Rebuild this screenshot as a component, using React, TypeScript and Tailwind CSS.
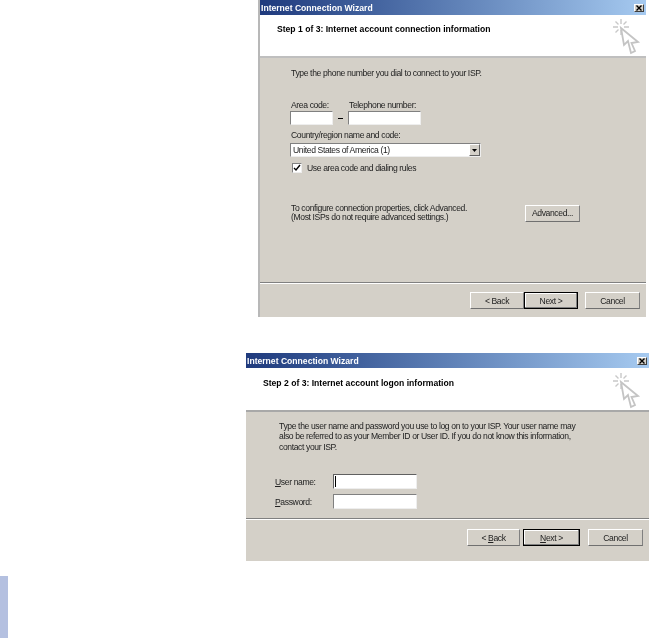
import type { ReactNode } from 'react';

function CursorIcon({ className }: { className: string }) {
  return (
    <svg width="26" height="38" viewBox="0 0 26 38" fill="none" className={'shrink-0 overflow-visible ' + className}>
      <path d="M9 1v5M9 12v5M1 9h5M12 9h5M3.5 3.5l3 3M14.5 3.5l-3 3M3.5 14.5l3-3" stroke="#c8c8c8" strokeWidth="1.4" />
      <path d="M9 10l3 17 4-4 3 12 4-2-3.5-8 6.500-1z" fill="#fff" stroke="#c4c4c4" strokeWidth="1.800" />
    </svg>
  );
}

function CloseButton() {
  return (
    <div className="flex h-[8px] w-[10px] items-center justify-center border border-t-white border-l-white border-r-[#404040] border-b-[#404040] bg-[#d4d0c8]">
      <svg width="6" height="6" viewBox="0 0 6 6">
        <path d="M0.500 0.500l5 5M5.500 0.500l-5 5" stroke="#000" strokeWidth="1.400" />
      </svg>
    </div>
  );
}

function WinButton({ children, def, className }: { children: ReactNode; def?: boolean; className: string }) {
  return (
    <div
      className={
        'flex items-center justify-center text-[8.600px] leading-[10px] tracking-[-0.38px] text-[#222] bg-[#d4d0c8] ' +
        (def
          ? 'border border-black shadow-[inset_-1px_-1px_0_#808080,inset_1px_1px_0_#fff] '
          : 'border border-t-white border-l-white border-r-[#808080] border-b-[#707070] ') +
        className
      }
    >
      {children}
    </div>
  );
}

function Field({ className }: { className: string }) {
  return (
    <div
      className={
        'bg-white border border-t-[#808080] border-l-[#808080] border-r-[#eeeeee] border-b-[#eeeeee] ' + className
      }
    />
  );
}

function TitleBar() {
  return (
    <div className="flex h-[15px] items-center justify-between bg-gradient-to-r from-[#1f3a7d] to-[#a6caf0] pl-[1px] pr-[2px]">
      <span className="mt-[1px] text-[8.600px] leading-[10px] font-bold text-white">Internet Connection Wizard</span>
      <CloseButton />
    </div>
  );
}

function FirstDialog() {
  return (
    <div className="ml-[258px] flex h-[317px] w-[388px] flex-col border-l-2 border-[#b8b8b8]">
      <TitleBar />
      <div className="flex h-[43px] items-start justify-between border-b-2 border-[#bfbfbf] bg-white pt-[8px] pl-[17px] pr-[8px]">
        <span className="mt-[1px] text-[8.600px] leading-[10px] font-bold text-black">
          Step 1 of 3: Internet account connection information
        </span>
        <CursorIcon className="-mt-[5px]" />
      </div>
      <div className="flex flex-1 flex-col bg-[#d4d0c8] text-[8.600px] leading-[10px] tracking-[-0.38px] text-[#222]">
        <div className="pl-[31px] pt-[10px]">Type the phone number you dial to connect to your ISP.</div>
        <div className="mt-[22px] flex pl-[31px]">
          <div className="w-[58px]">Area code:</div>
          <div>Telephone number:</div>
        </div>
        <div className="mt-[1px] flex items-center pl-[30px]">
          <Field className="h-[14px] w-[43px]" />
          <div className="mx-[5px] h-[1px] w-[5px] bg-black" />
          <Field className="h-[14px] w-[73px]" />
        </div>
        <div className="mt-[5px] pl-[31px]">Country/region name and code:</div>
        <div className="mt-[3px] ml-[30px] flex h-[14px] w-[191px] items-center justify-between border border-t-[#808080] border-l-[#808080] border-r-[#eeeeee] border-b-[#eeeeee] bg-white pl-[2px]">
          <span>United States of America (1)</span>
          <div className="flex h-[12px] w-[11px] items-center justify-center border border-t-white border-l-white border-r-[#606060] border-b-[#606060] bg-[#d4d0c8]">
            <svg width="5" height="3" viewBox="0 0 5 3">
              <path d="M0 0h5L2.500 3z" fill="#000" />
            </svg>
          </div>
        </div>
        <div className="mt-[6px] flex items-center gap-[5px] pl-[32px]">
          <div className="flex h-[10px] w-[10px] items-center justify-center border border-t-[#808080] border-l-[#808080] border-r-[#eeeeee] border-b-[#eeeeee] bg-white">
            <svg width="8" height="8" viewBox="0 0 8 8">
              <path d="M1 4l2 2 4-5" stroke="#000" strokeWidth="1.400" fill="none" />
            </svg>
          </div>
          <span>Use area code and dialing rules</span>
        </div>
        <div className="mt-[31px] flex items-center pl-[31px]">
          <div className="w-[234px] leading-[9px]">
            <div>To configure connection properties, click Advanced.</div>
            <div>(Most ISPs do not require advanced settings.)</div>
          </div>
          <WinButton className="h-[17px] w-[55px]">Advanced...</WinButton>
        </div>
        <div className="mt-[60px] border-t border-b border-t-[#808080] border-b-white" />
        <div className="mt-[8px] flex pl-[210px]">
          <WinButton className="h-[17px] w-[54px]">&lt; Back</WinButton>
          <WinButton def className="h-[17px] w-[54px]">Next &gt;</WinButton>
          <WinButton className="ml-[7px] h-[17px] w-[55px]">Cancel</WinButton>
        </div>
      </div>
    </div>
  );
}

function SecondDialog() {
  return (
    <div className="mt-[36px] ml-[246px] flex h-[208px] w-[403px] flex-col">
      <TitleBar />
      <div className="flex h-[44px] items-start justify-between border-b-2 border-[#a8a8a8] bg-white pt-[8px] pl-[17px] pr-[11px]">
        <span className="mt-[2px] text-[8.600px] leading-[10px] font-bold text-black">
          Step 2 of 3: Internet account logon information
        </span>
        <CursorIcon className="-mt-[4px]" />
      </div>
      <div className="flex flex-1 flex-col bg-[#d4d0c8] text-[8.600px] leading-[10px] tracking-[-0.38px] text-[#222]">
        <div className="pl-[33px] pt-[9px]">
          <div>Type the user name and password you use to log on to your ISP. Your user name may</div>
          <div>also be referred to as your Member ID or User ID. If you do not know this information,</div>
          <div className="mt-[1px]">contact your ISP.</div>
        </div>
        <div className="mt-[22px] flex items-center pl-[29px]">
          <span className="w-[58px]">
            <u>U</u>ser name:
          </span>
          <div className="flex h-[15px] w-[84px] items-center border border-t-[#606060] border-l-[#606060] border-r-[#eeeeee] border-b-[#eeeeee] bg-white pl-[1px]">
            <div className="h-[11px] w-[1px] bg-black" />
          </div>
        </div>
        <div className="mt-[5px] flex items-center pl-[29px]">
          <span className="w-[58px]">
            <u>P</u>assword:
          </span>
          <Field className="h-[15px] w-[84px]" />
        </div>
        <div className="mt-[9px] border-t border-b border-t-[#808080] border-b-white" />
        <div className="mt-[9px] flex pl-[221px]">
          <WinButton className="h-[17px] w-[53px]">
            &lt;&nbsp;<u>B</u>ack
          </WinButton>
          <WinButton def className="ml-[3px] h-[17px] w-[57px]">
            <u>N</u>ext &gt;
          </WinButton>
          <WinButton className="ml-[8px] h-[17px] w-[55px]">Cancel</WinButton>
        </div>
      </div>
    </div>
  );
}

export default function App() {
  return (
    <div className="flex h-[638px] w-full flex-col overflow-hidden bg-white font-['Liberation_Sans',Arial,sans-serif] blur-[0.3px]">
      <FirstDialog />
      <SecondDialog />
      <div className="mt-[15px] h-[62px] w-[8px] bg-[#b4c0e0]" />
    </div>
  );
}
